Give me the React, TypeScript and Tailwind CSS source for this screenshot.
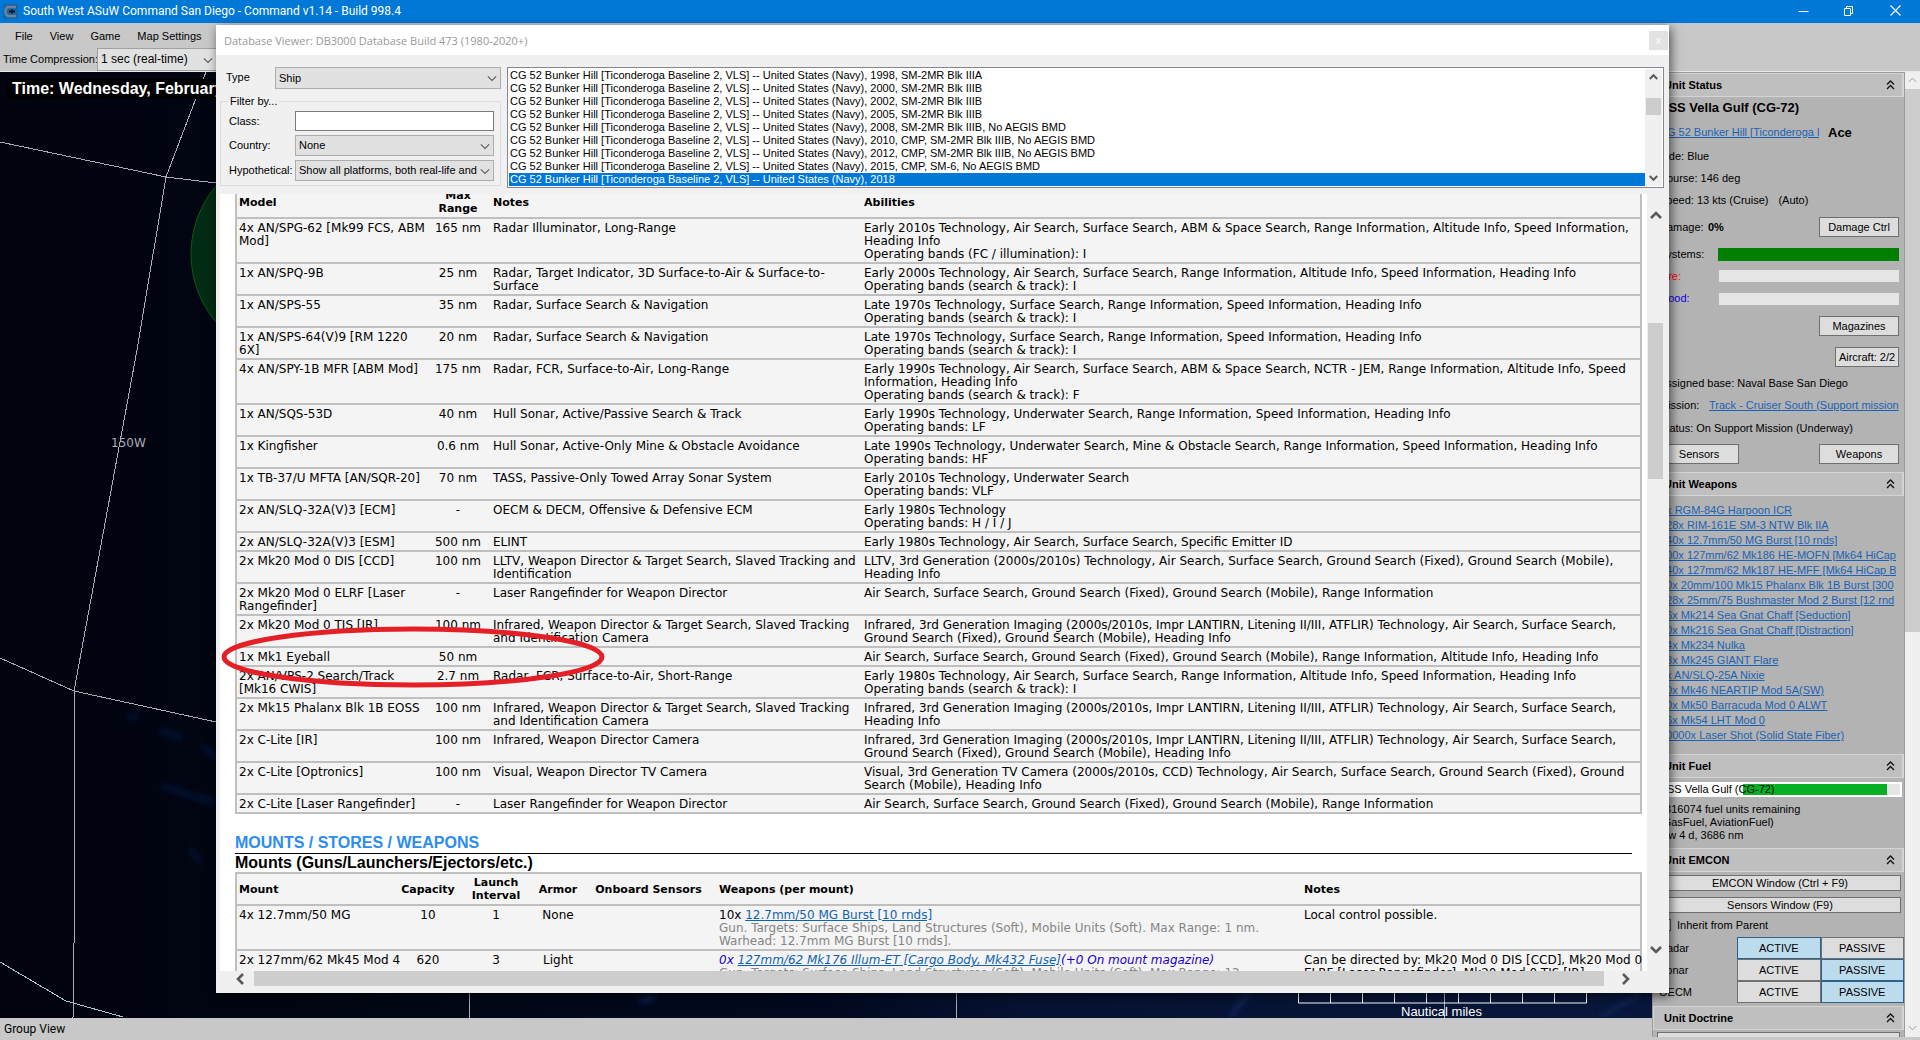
import React from "react";

type SensorRow = [string, string, string, string];

const SENSORS: SensorRow[] = [
  ["4x AN/SPG-62 [Mk99 FCS, ABM\nMod]", "165 nm", "Radar Illuminator, Long-Range", "Early 2010s Technology, Air Search, Surface Search, ABM & Space Search, Range Information, Altitude Info, Speed Information,\nHeading Info\nOperating bands (FC / illumination): I"],
  ["1x AN/SPQ-9B", "25 nm", "Radar, Target Indicator, 3D Surface-to-Air & Surface-to-\nSurface", "Early 2000s Technology, Air Search, Surface Search, Range Information, Altitude Info, Speed Information, Heading Info\nOperating bands (search & track): I"],
  ["1x AN/SPS-55", "35 nm", "Radar, Surface Search & Navigation", "Late 1970s Technology, Surface Search, Range Information, Speed Information, Heading Info\nOperating bands (search & track): I"],
  ["1x AN/SPS-64(V)9 [RM 1220\n6X]", "20 nm", "Radar, Surface Search & Navigation", "Late 1970s Technology, Surface Search, Range Information, Speed Information, Heading Info\nOperating bands (search & track): I"],
  ["4x AN/SPY-1B MFR [ABM Mod]", "175 nm", "Radar, FCR, Surface-to-Air, Long-Range", "Early 1990s Technology, Air Search, Surface Search, ABM & Space Search, NCTR - JEM, Range Information, Altitude Info, Speed\nInformation, Heading Info\nOperating bands (search & track): F"],
  ["1x AN/SQS-53D", "40 nm", "Hull Sonar, Active/Passive Search & Track", "Early 1990s Technology, Underwater Search, Range Information, Speed Information, Heading Info\nOperating bands: LF"],
  ["1x Kingfisher", "0.6 nm", "Hull Sonar, Active-Only Mine & Obstacle Avoidance", "Late 1990s Technology, Underwater Search, Mine & Obstacle Search, Range Information, Speed Information, Heading Info\nOperating bands: HF"],
  ["1x TB-37/U MFTA [AN/SQR-20]", "70 nm", "TASS, Passive-Only Towed Array Sonar System", "Early 2010s Technology, Underwater Search\nOperating bands: VLF"],
  ["2x AN/SLQ-32A(V)3 [ECM]", "-", "OECM & DECM, Offensive & Defensive ECM", "Early 1980s Technology\nOperating bands: H / I / J"],
  ["2x AN/SLQ-32A(V)3 [ESM]", "500 nm", "ELINT", "Early 1980s Technology, Air Search, Surface Search, Specific Emitter ID"],
  ["2x Mk20 Mod 0 DIS [CCD]", "100 nm", "LLTV, Weapon Director & Target Search, Slaved Tracking and\nIdentification", "LLTV, 3rd Generation (2000s/2010s) Technology, Air Search, Surface Search, Ground Search (Fixed), Ground Search (Mobile),\nHeading Info"],
  ["2x Mk20 Mod 0 ELRF [Laser\nRangefinder]", "-", "Laser Rangefinder for Weapon Director", "Air Search, Surface Search, Ground Search (Fixed), Ground Search (Mobile), Range Information"],
  ["2x Mk20 Mod 0 TIS [IR]", "100 nm", "Infrared, Weapon Director & Target Search, Slaved Tracking\nand Identification Camera", "Infrared, 3rd Generation Imaging (2000s/2010s, Impr LANTIRN, Litening II/III, ATFLIR) Technology, Air Search, Surface Search,\nGround Search (Fixed), Ground Search (Mobile), Heading Info"],
  ["1x Mk1 Eyeball", "50 nm", "", "Air Search, Surface Search, Ground Search (Fixed), Ground Search (Mobile), Range Information, Altitude Info, Heading Info"],
  ["2x AN/VPS-2 Search/Track\n[Mk16 CWIS]", "2.7 nm", "Radar, FCR, Surface-to-Air, Short-Range", "Early 1980s Technology, Air Search, Surface Search, Range Information, Altitude Info, Speed Information, Heading Info\nOperating bands (search & track): I"],
  ["2x Mk15 Phalanx Blk 1B EOSS", "100 nm", "Infrared, Weapon Director & Target Search, Slaved Tracking\nand Identification Camera", "Infrared, 3rd Generation Imaging (2000s/2010s, Impr LANTIRN, Litening II/III, ATFLIR) Technology, Air Search, Surface Search,\nHeading Info"],
  ["2x C-Lite [IR]", "100 nm", "Infrared, Weapon Director Camera", "Infrared, 3rd Generation Imaging (2000s/2010s, Impr LANTIRN, Litening II/III, ATFLIR) Technology, Air Search, Surface Search,\nGround Search (Fixed), Ground Search (Mobile), Heading Info"],
  ["2x C-Lite [Optronics]", "100 nm", "Visual, Weapon Director TV Camera", "Visual, 3rd Generation TV Camera (2000s/2010s, CCD) Technology, Air Search, Surface Search, Ground Search (Fixed), Ground\nSearch (Mobile), Heading Info"],
  ["2x C-Lite [Laser Rangefinder]", "-", "Laser Rangefinder for Weapon Director", "Air Search, Surface Search, Ground Search (Fixed), Ground Search (Mobile), Range Information"],
];

const PLATFORM = "CG 52 Bunker Hill [Ticonderoga Baseline 2, VLS] -- United States (Navy), ";
const PLATFORMS = [
  "1998, SM-2MR Blk IIIA",
  "2000, SM-2MR Blk IIIB",
  "2002, SM-2MR Blk IIIB",
  "2005, SM-2MR Blk IIIB",
  "2008, SM-2MR Blk IIIB, No AEGIS BMD",
  "2010, CMP, SM-2MR Blk IIIB, No AEGIS BMD",
  "2012, CMP, SM-2MR Blk IIIB, No AEGIS BMD",
  "2015, CMP, SM-6, No AEGIS BMD",
  "2018",
];

const WEAPONS = [
  "8x RGM-84G Harpoon ICR",
  "128x RIM-161E SM-3 NTW Blk IIA",
  "240x 12.7mm/50 MG Burst [10 rnds]",
  "600x 127mm/62 Mk186 HE-MOFN [Mk64 HiCap",
  "640x 127mm/62 Mk187 HE-MFF [Mk64 HiCap B",
  "40x 20mm/100 Mk15 Phalanx Blk 1B Burst [300",
  "128x 25mm/75 Bushmaster Mod 2 Burst [12 rnd",
  "36x Mk214 Sea Gnat Chaff [Seduction]",
  "60x Mk216 Sea Gnat Chaff [Distraction]",
  "14x Mk234 Nulka",
  "48x Mk245 GIANT Flare",
  "4x AN/SLQ-25A Nixie",
  "40x Mk46 NEARTIP Mod 5A(SW)",
  "10x Mk50 Barracuda Mod 0 ALWT",
  "36x Mk54 LHT Mod 0",
  "10000x Laser Shot (Solid State Fiber)",
];

type Dir = "up" | "down" | "left" | "right";
const CHEVRONS: Record<Dir, string> = {
  up: "M1 8 L6 3 L11 8",
  down: "M1 4 L6 9 L11 4",
  left: "M8 1 L3 6 L8 11",
  right: "M4 1 L9 6 L4 11",
};

function Chevron({ dir, size = 10, bold = false, color = "#5a5a5a" }: { dir: Dir; size?: number; bold?: boolean; color?: string }) {
  return (
    <svg width={size} height={size} viewBox="0 0 12 12" fill="none" stroke={color} strokeWidth={bold ? 2.6 : 1.3} aria-hidden="true" className="shrink-0">
      <path d={CHEVRONS[dir]} />
    </svg>
  );
}

function DoubleUp() {
  return (
    <svg width="9" height="10" viewBox="0 0 9 10" fill="none" stroke="#111" strokeWidth="1.3" aria-hidden="true" className="shrink-0">
      <path d="M1 4.5 L4.500 1 L8 4.5 M1 9 L4.500 5.500 L8 9" />
    </svg>
  );
}

function DropDown({ id, value, className = "" }: { id: string; value: string; className?: string }) {
  return (
    <div className={"relative flex items-center " + className}>
      <select id={id} className="h-full w-full cursor-default appearance-none overflow-hidden rounded-none border border-[#adadad] bg-[#e1e1e1] pr-[14px] pl-[3px] text-[11px] outline-none">
        <option>{value}</option>
      </select>
      <span className="pointer-events-none absolute right-[4px]">
        <Chevron dir="down" />
      </span>
    </div>
  );
}

function TitleBar() {
  return (
    <header className="flex h-6 shrink-0 items-center border-b border-[#b8c8da] bg-[#0078d7] pl-[3px] text-white">
      <svg width="15" height="15" viewBox="0 0 15 15" className="mr-[5px]" aria-hidden="true">
        <rect width="15" height="15" rx="2" fill="#1b64a5" />
        <path d="M13 3 H6 Q2.5 3 2.5 7.5 T6 12 H13" fill="none" stroke="#6f8499" strokeWidth="2.4" />
        <path d="M6 7.5 H12 M9 5.5 V9.5" stroke="#07182b" strokeWidth="2" />
      </svg>
      <h1 className="flex-1 font-[Roboto,sans-serif] text-[12px]">South West ASuW Command San Diego - Command v1.14 - Build 998.4</h1>
      <div className="flex h-5 items-center self-start">
        <button aria-label="Minimize" className="flex h-full w-[46px] items-center justify-center">
          <svg width="11" height="11" viewBox="0 0 11 11" stroke="#fff" aria-hidden="true"><path d="M0.5 6.5 H10.5" /></svg>
        </button>
        <button aria-label="Restore" className="flex h-full w-[45px] items-center justify-center">
          <svg width="11" height="11" viewBox="0 0 11 11" fill="none" stroke="#fff" aria-hidden="true"><path d="M1.5 3.5 H7.5 V10.5 H1.5 Z M3.5 3.5 V1.5 H9.5 V8.5 H7.5" /></svg>
        </button>
        <button aria-label="Close" className="flex h-full w-[49px] items-center justify-center">
          <svg width="11" height="11" viewBox="0 0 11 11" stroke="#fff" strokeWidth="1.2" aria-hidden="true"><path d="M0.5 0.5 L10.5 10.5 M10.5 0.5 L0.5 10.5" /></svg>
        </button>
      </div>
    </header>
  );
}

function MapView() {
  return (
    <section aria-label="Map" className="relative min-h-0 flex-1 overflow-hidden bg-[#01040f]">
      <svg className="absolute inset-0 h-full w-full" aria-hidden="true">
        <defs>
          <linearGradient id="sea" x1="0" x2="1" y1="0" y2="0">
            <stop offset="0" stopColor="#01030e" />
            <stop offset="0.25" stopColor="#020715" />
            <stop offset="0.5" stopColor="#020a20" />
            <stop offset="0.62" stopColor="#061233" />
            <stop offset="1" stopColor="#08173b" />
          </linearGradient>
          <filter id="soft" x="-20%" y="-20%" width="140%" height="140%"><feGaussianBlur stdDeviation="3" /></filter>
        </defs>
        <rect width="100%" height="100%" fill="url(#sea)" />
        <g fill="none" stroke="#0c2250" filter="url(#soft)">
          <path d="M128 646 L138 643 M160 658 L182 666 M202 674 L216 686 M162 714 L186 722 L214 730 M190 776 L200 790" strokeWidth="3" />
          <path d="M640 930 L655 925 M1230 945 L1250 920 M1600 945 L1640 922" strokeWidth="6" />
        </g>
        <circle cx="296" cy="182" r="105" fill="#012b12" stroke="#0b5a14" />
        <g fill="none" stroke="#a9acb4" strokeWidth="1" shapeRendering="crispEdges">
          <path d="M206 0 L166 105 L137 278 L74 619 V871 L73 946" />
          <path d="M0 70 L166 105 L216 111" />
          <path d="M0 586 L74 619 L216 650" />
          <path d="M0 890 L66 929 L123 945" stroke="#a9c6cc" />
          <path d="M469.500 900 V946 M956.500 900 V946 M1444.500 900 V946" />
        </g>
        <path d="M1298.500 900 V931 H1586.500 V900 M1330.500 900 V931 M1362.500 900 V931 M1394.500 900 V931 M1426.500 900 V931 M1458.500 900 V931 M1490.500 900 V931 M1522.500 900 V931 M1554.500 900 V931" fill="none" stroke="#fff" strokeWidth="1" />
      </svg>
      <p className="absolute top-[7px] left-[7px] bg-black px-[5px] text-[16px] leading-5 font-bold whitespace-nowrap text-white">Time: Wednesday, February</p>
      <span className="absolute top-[364px] left-[111px] font-['DejaVu_Sans',sans-serif] text-[12px] leading-[14px] text-[#a9acb4]">150W</span>
      <span className="absolute bottom-0 left-[1401px] text-[13px] leading-[13px] text-white">Nautical miles</span>
    </section>
  );
}

const TH = "border-b-2 border-[#bfbfbf] p-[2px]";
const TD = "border-b-2 border-[#bfbfbf] px-[2px] pt-[3px] pb-px whitespace-pre";

function SensorTable() {
  return (
    <table className="w-full table-fixed border-separate border-spacing-0 border-x-2 border-t-2 border-[#bfbfbf] bg-[#f4f4f4]">
      <colgroup>
        <col className="w-[188px]" />
        <col className="w-[66px]" />
        <col className="w-[371px]" />
        <col />
      </colgroup>
      <thead>
        <tr className="text-left text-[11px]">
          <th className={TH}>Model</th>
          <th className={TH + " text-center"}>Max<br />Range</th>
          <th className={TH}>Notes</th>
          <th className={TH}>Abilities</th>
        </tr>
      </thead>
      <tbody>
        {SENSORS.map((row, i) => (
          <tr key={i} className="align-top">
            {row.map((cell, j) => (
              <td key={j} className={TD + (j === 1 ? " text-center" : "")}>{cell}</td>
            ))}
          </tr>
        ))}
      </tbody>
    </table>
  );
}

function MountTable() {
  return (
    <table className="w-full table-fixed border-separate border-spacing-0 border-x-2 border-t-2 border-[#bfbfbf] bg-[#f4f4f4]">
      <colgroup>
        <col className="w-[156px]" />
        <col className="w-[70px]" />
        <col className="w-[66px]" />
        <col className="w-[58px]" />
        <col className="w-[130px]" />
        <col className="w-[585px]" />
        <col />
      </colgroup>
      <thead>
        <tr className="text-[11px]">
          <th className={TH + " text-left"}>Mount</th>
          <th className={TH}>Capacity</th>
          <th className={TH}>Launch<br />Interval</th>
          <th className={TH}>Armor</th>
          <th className="border-b-2 border-[#bfbfbf] py-[2px] pr-[9px] pl-[2px]">Onboard Sensors</th>
          <th className={TH + " text-left"}>Weapons (per mount)</th>
          <th className={TH + " text-left"}>Notes</th>
        </tr>
      </thead>
      <tbody>
        <tr className="text-center align-top">
          <td className={TD + " text-left"}>4x 12.7mm/50 MG</td>
          <td className={TD}>10</td>
          <td className={TD}>1</td>
          <td className={TD}>None</td>
          <td className={TD} />
          <td className={TD + " text-left text-[#858585]"}>
            <span className="text-black">10x </span>
            <a href="#mg" className="text-[#1263ae] underline">12.7mm/50 MG Burst [10 rnds]</a>
            {"\nGun. Targets: Surface Ships, Land Structures (Soft), Mobile Units (Soft). Max Range: 1 nm.\nWarhead: 12.7mm MG Burst [10 rnds]."}
          </td>
          <td className={TD + " text-left"}>Local control possible.</td>
        </tr>
        <tr className="text-center align-top">
          <td className={TD + " text-left"}>2x 127mm/62 Mk45 Mod 4</td>
          <td className={TD}>620</td>
          <td className={TD}>3</td>
          <td className={TD}>Light</td>
          <td className={TD} />
          <td className={TD + " text-left text-[#858585]"}>
            <span className="text-[#1a00d0] italic">
              0x <a href="#illum" className="text-[#1263ae] underline">127mm/62 Mk176 Illum-ET [Cargo Body, Mk432 Fuse]</a>(+0 On mount magazine)
            </span>
            {"\nGun. Targets: Surface Ships, Land Structures (Soft), Mobile Units (Soft). Max Range: 12"}
          </td>
          <td className={TD + " text-left"}>{"Can be directed by: Mk20 Mod 0 DIS [CCD], Mk20 Mod 0\nELRF [Laser Rangefinder], Mk20 Mod 0 TIS [IR]"}</td>
        </tr>
      </tbody>
    </table>
  );
}

function DatabaseViewer() {
  return (
    <div role="dialog" aria-labelledby="dbtitle" className="absolute top-[25px] right-[251px] bottom-[47px] left-[216px] flex flex-col bg-[#f0f0f0] shadow-[2px_3px_10px_rgba(0,0,0,0.6)]">
      <div className="flex h-[30px] shrink-0 items-center bg-white pr-px pl-2">
        <h2 id="dbtitle" className="flex-1 font-['Open_Sans',sans-serif] text-[11px] text-[#999]">Database Viewer: DB3000 Database Build 473 (1980-2020+)</h2>
        <button aria-label="Close viewer" className="flex h-[19px] w-[19px] items-center justify-center bg-[#e2e2e2] text-[10px] font-bold text-[#f6f6f6]">x</button>
      </div>

      <div className="flex shrink-0 gap-1.5 pt-3 pr-[5px] pb-1.5 pl-1">
        <form className="h-[121px] w-[281px] shrink-0">
          <div className="flex h-[22px]">
            <label htmlFor="type" className="w-[55px] pl-1.5 leading-5">Type</label>
            <DropDown id="type" value="Ship" className="flex-1" />
          </div>
          <fieldset className="mt-1 border border-[#dcdcdc] px-1.5 pb-1">
            <legend className="ml-px px-0.5 leading-4">Filter by...</legend>
            <div className="grid grid-cols-[66px_1fr] items-center gap-y-1 pt-0.5 pl-0.5">
              <label htmlFor="class">Class:</label>
              <input id="class" type="text" className="h-5 w-full border border-[#7a7a7a] bg-white px-1 outline-none" />
              <label htmlFor="country">Country:</label>
              <DropDown id="country" value="None" className="h-[21px]" />
              <label htmlFor="hypo" className="whitespace-nowrap">Hypothetical:</label>
              <DropDown id="hypo" value="Show all platforms, both real-life and h" className="h-[21px] min-w-0" />
            </div>
          </fieldset>
        </form>
        <div className="flex min-w-0 flex-1 self-start border border-[#828790] bg-white p-px">
          <ul role="listbox" aria-label="Platforms" className="min-w-0 flex-1">
            {PLATFORMS.map((p, i) => (
              <li key={p} role="option" aria-selected={i === 8} className={"h-[13px] overflow-hidden pl-px leading-[13px] whitespace-nowrap " + (i === 8 ? "bg-[#0078d7] text-white" : "")}>
                {PLATFORM + p}
              </li>
            ))}
          </ul>
          <div className="flex w-[17px] flex-col items-center bg-[#f0f0f0] py-1">
            <Chevron dir="up" size={9} bold />
            <div className="mt-4 h-[17px] w-[15px] bg-[#cdcdcd]" />
            <div className="flex-1" />
            <Chevron dir="down" size={9} bold />
          </div>
        </div>
      </div>

      <div className="flex min-h-0 flex-1 pr-[5px] pl-1">
        <div className="min-w-0 flex-1 overflow-hidden bg-white pr-[5px] pl-[15px] font-['DejaVu_Sans',sans-serif] text-[12px] leading-[13px]">
          <div className="-mt-[9px]">
            <SensorTable />
            <h3 className="mt-[18px] mr-[10px] border-b border-black font-['Liberation_Sans',sans-serif] text-[16px] leading-[21px] font-bold text-[#2b8df0]">MOUNTS / STORES / WEAPONS</h3>
            <h4 className="font-['Liberation_Sans',sans-serif] text-[16px] leading-[18px] font-bold">Mounts (Guns/Launchers/Ejectors/etc.)</h4>
            <MountTable />
          </div>
        </div>
        <div className="flex w-[17px] flex-col items-center pt-4 pb-4">
          <Chevron dir="up" size={12} bold />
          <div className="mt-[101px] h-[156px] w-[15px] bg-[#cdcdcd]" />
          <div className="flex-1" />
          <Chevron dir="down" size={12} bold />
        </div>
      </div>
      <div className="flex h-[22px] shrink-0 items-start pr-[38px] pl-[19px]">
        <span className="flex h-[15px] w-[19px] items-center"><Chevron dir="left" size={12} bold /></span>
        <div className="h-[15px] flex-1 bg-[#cdcdcd]" />
        <span className="flex h-[15px] w-[27px] items-center justify-end"><Chevron dir="right" size={12} bold /></span>
      </div>
    </div>
  );
}

function PanelHeader({ title }: { title: string }) {
  return (
    <h3 className="flex h-6 items-center justify-between border border-r-2 border-[#d4d4d4] bg-[#bfbfbf] pr-[7px] pl-[10px] font-bold text-black">
      {title}
      <DoubleUp />
    </h3>
  );
}

const PANEL_BTN = "h-5 border border-[#707070] bg-[#dddddd] text-center leading-[18px] whitespace-nowrap";
const WIDE_BTN = "h-4 w-full border border-[#707070] bg-[#dddddd] text-center leading-[14px] whitespace-nowrap";
const LINK = "text-[#1b62b4] underline";

function EmconRow({ name, active }: { name: string; active: boolean }) {
  const on = "border-[#2c628b] bg-[#bcdcee]";
  const off = "border-[#707070] bg-[#dddddd]";
  return (
    <div className="flex h-[22px] items-center">
      <span className="w-[78px]">{name}</span>
      <button aria-pressed={active} className={"h-full flex-1 border " + (active ? on : off)}>ACTIVE</button>
      <button aria-pressed={!active} className={"h-full flex-1 border " + (active ? off : on)}>PASSIVE</button>
    </div>
  );
}

function SidePanel() {
  return (
    <aside className="flex w-[268px] shrink-0 bg-[#b3b3b3]">
      <div className="min-w-0 flex-1 overflow-hidden border-x border-t border-[#9a9a9a]">
        <PanelHeader title="Unit Status" />
        <div className="h-[375px] overflow-hidden pr-[5px] pl-[6px] whitespace-nowrap">
          <p className="h-[22px] text-[13px] leading-[22px] font-bold">USS Vella Gulf (CG-72)</p>
          <div className="flex h-[26px] items-center">
            <a href="#class" className={"w-[160px] overflow-hidden " + LINK}>CG 52 Bunker Hill [Ticonderoga B</a>
            <strong className="pl-[9px] text-[13px]">Ace</strong>
          </div>
          <p className="h-[22px] leading-[22px]">Side: Blue</p>
          <p className="h-[22px] leading-[22px]">Course: 146 deg</p>
          <p className="flex h-[22px] gap-[10px] leading-[22px]"><span>Speed: 13 kts (Cruise)</span><span>(Auto)</span></p>
          <div className="flex h-8 items-center">
            <span className="w-[49px]">Damage:</span>
            <strong className="flex-1">0%</strong>
            <button className={PANEL_BTN + " w-20"}>Damage Ctrl</button>
          </div>
          <div className="flex h-[22px] items-center">
            <span className="w-[59px]">Systems:</span>
            <div className="h-[13px] flex-1 bg-[#008000]" />
          </div>
          <div className="flex h-[22px] items-center">
            <span className="w-[60px] text-[#f00]">Fire:</span>
            <div className="h-3 flex-1 bg-[#e6e6e6]" />
          </div>
          <div className="flex h-[23px] items-center">
            <span className="w-[60px] text-[#1000e0]">Flood:</span>
            <div className="h-3 flex-1 bg-[#e6e6e6]" />
          </div>
          <div className="flex h-[31px] items-center justify-end">
            <button className={PANEL_BTN + " w-20"}>Magazines</button>
          </div>
          <div className="flex h-[31px] items-center justify-end">
            <button className={PANEL_BTN + " w-16"}>Aircraft: 2/2</button>
          </div>
          <p className="h-[22px] leading-[22px]">Assigned base: Naval Base San Diego</p>
          <div className="flex h-[23px] items-center">
            <span className="w-[50px]">Mission:</span>
            <a href="#mission" className={"min-w-0 flex-1 overflow-hidden " + LINK}>Track - Cruiser South (Support mission</a>
          </div>
          <p className="h-[22px] leading-[22px]">Status: On Support Mission (Underway)</p>
          <div className="flex h-[29px] items-center justify-between">
            <button className={PANEL_BTN + " w-20"}>Sensors</button>
            <button className={PANEL_BTN + " w-20"}>Weapons</button>
          </div>
        </div>

        <PanelHeader title="Unit Weapons" />
        <ul className="mr-2 h-[258px] overflow-hidden pt-[7px] whitespace-nowrap">
          {WEAPONS.map((w) => (
            <li key={w} className="flex h-[15px] items-center overflow-hidden pl-[7px]">
              <a href="#weapon" className={LINK}>{w}</a>
            </li>
          ))}
        </ul>

        <PanelHeader title="Unit Fuel" />
        <div className="h-[70px] pt-1 pr-0.5 pl-1">
          <div className="relative flex h-[15px] items-center border-2 border-white bg-white">
            <span className="w-[84px]" />
            <div className="h-full flex-1 bg-[#06b025]" />
            <div className="h-full w-[13px] bg-[#e6e6e6]" />
            <span className="absolute left-0 leading-[11px] whitespace-nowrap">USS Vella Gulf (CG-72)</span>
          </div>
          <p className="pt-1.5 pl-0.5 leading-[13px] whitespace-pre">{"2316074 fuel units remaining\n(GasFuel, AviationFuel)\n1 w 4 d, 3686 nm"}</p>
        </div>

        <PanelHeader title="Unit EMCON" />
        <div className="h-[134px] overflow-hidden pl-[6px]">
          <div className="flex flex-col gap-1.5 pt-[3px] pr-[3px]">
            <button className={WIDE_BTN}>EMCON Window (Ctrl + F9)</button>
            <button className={WIDE_BTN}>Sensors Window (F9)</button>
          </div>
          <label className="flex h-6 items-center gap-1.5">
            <input type="checkbox" className="h-3 w-3 appearance-none border border-[#555] bg-[#ddd]" />
            Inherit from Parent
          </label>
          <EmconRow name="Radar" active />
          <EmconRow name="Sonar" active={false} />
          <EmconRow name="OECM" active={false} />
        </div>

        <PanelHeader title="Unit Doctrine" />
        <div className="mx-1 mt-0.5 h-3 border border-[#707070] bg-[#ddd]" />
      </div>
      <div className="flex w-[15px] shrink-0 flex-col items-center bg-[#f0f0f0]">
        <span className="flex h-[17px] items-center"><Chevron dir="up" size={9} color="#999" /></span>
        <div className="h-[543px] w-full bg-[#cdcdcd]" />
        <div className="flex-1" />
        <span className="flex h-[19px] items-center"><Chevron dir="down" size={9} color="#999" /></span>
      </div>
    </aside>
  );
}

export default function App() {
  return (
    <div className="relative flex h-screen flex-col overflow-hidden bg-[#c8c8c8] font-['Liberation_Sans',Arial,sans-serif] text-[11px] leading-[13px] text-black">
      <TitleBar />
      <nav className="flex h-6 shrink-0 items-center gap-[17px] pl-[15px]">
        {["File", "View", "Game", "Map Settings"].map((m) => (
          <button key={m} className="whitespace-nowrap">{m}</button>
        ))}
      </nav>
      <div className="flex h-6 shrink-0 items-center border-b border-[#e8e8e8] pl-[3px]">
        <label htmlFor="compression" className="w-[94px] whitespace-nowrap">Time Compression:</label>
        <div className="relative flex h-[23px] w-[120px] items-center">
          <select id="compression" className="h-full w-full appearance-none border border-[#a0a0a0] bg-[#e1e1e1] pl-[3px] text-[12px]">
            <option>1 sec (real-time)</option>
          </select>
          <span className="pointer-events-none absolute right-[4px]"><Chevron dir="down" /></span>
        </div>
      </div>
      <div className="flex min-h-0 flex-1">
        <div className="flex min-w-0 flex-1 flex-col">
          <MapView />
          <footer className="flex h-[22px] shrink-0 items-center pl-1 font-[Roboto,sans-serif] text-[12px]">Group View</footer>
        </div>
        <div className="flex flex-col pb-[3px]">
          <div className="flex min-h-0 flex-1"><SidePanel /></div>
        </div>
      </div>
      <DatabaseViewer />
      <svg className="pointer-events-none absolute top-[626px] left-[220px]" width="386" height="64" viewBox="0 0 386 64" fill="none" role="img" aria-label="Highlighted row">
        <ellipse cx="193" cy="31" rx="189" ry="28" stroke="#e41f26" strokeWidth="5" />
      </svg>
    </div>
  );
}
